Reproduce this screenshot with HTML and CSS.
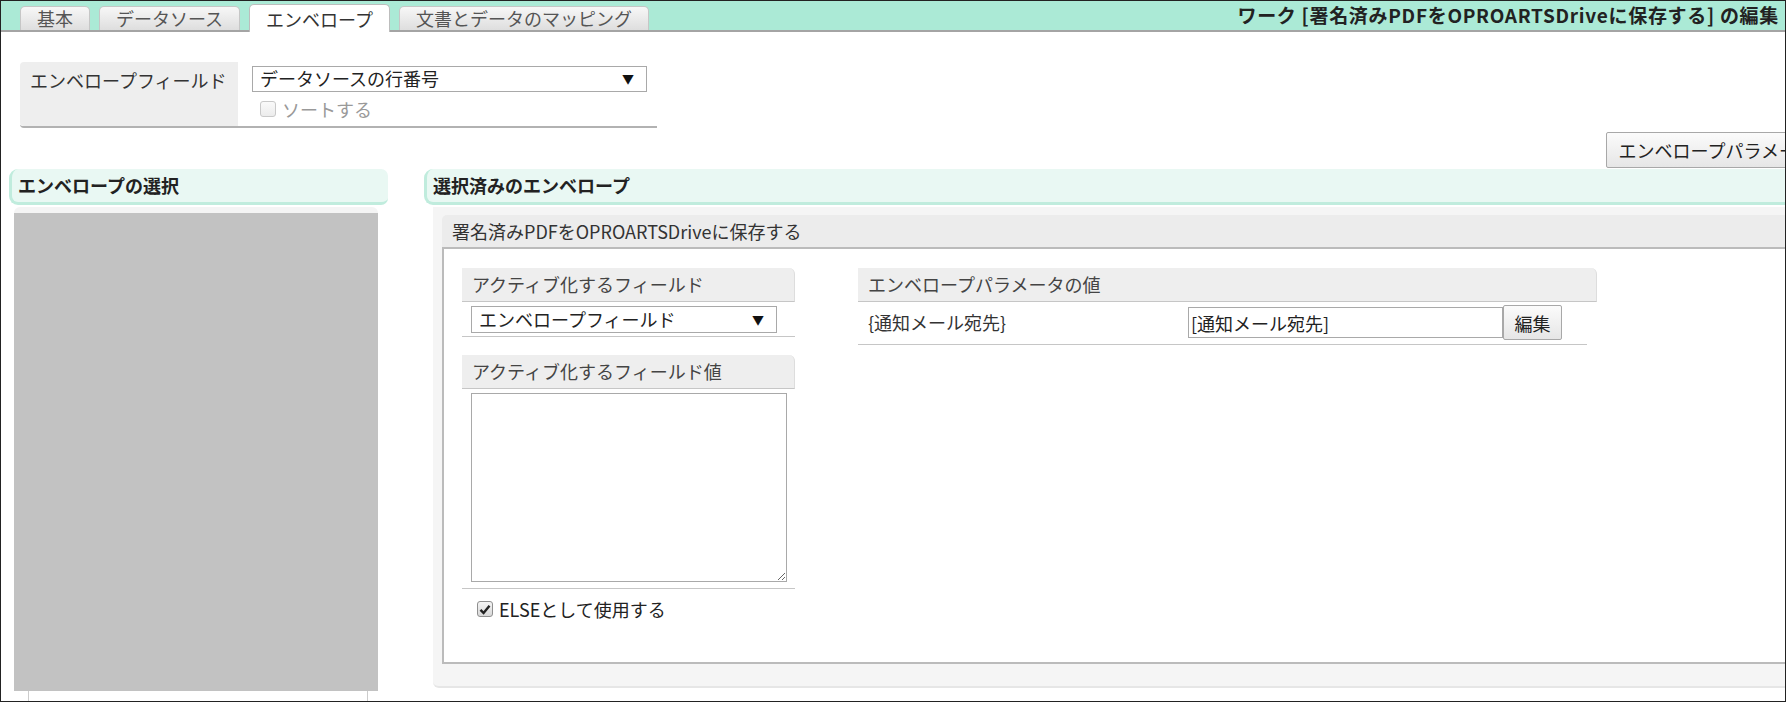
FILE: index.html
```html
<!DOCTYPE html>
<html lang="ja">
<head>
  <meta charset="UTF-8" />
  <title>ワークの編集</title>
  <link rel="stylesheet" href="styles.css">
</head>
<body>
<div class="frame">

  <!-- タブ -->
  <header class="tabbar">
    <ul class="tabs">
      <li class="tab">基本</li>
      <li class="tab">データソース</li>
      <li class="tab active">エンベロープ</li>
      <li class="tab">文書とデータのマッピング</li>
    </ul>
    <h1 class="work-title">ワーク [署名済みPDFをOPROARTSDriveに保存する] の編集</h1>
  </header>

  <div class="content">

    <!-- エンベロープフィールド -->
    <div class="field-box">
      <div class="field-label">エンベロープフィールド</div>
      <div class="field-value">
        <div class="select select-wide"><span>データソースの行番号</span><span class="arrow">▼</span></div>
        <label class="check-line disabled"><span class="chk"></span>ソートする</label>
      </div>
    </div>

    <div class="toolbar">
      <button class="btn param-btn">エンベロープパラメータ</button>
    </div>

    <div class="columns">
      <!-- 左 -->
      <section class="col-left">
        <h2 class="sec-head">エンベロープの選択</h2>
        <div class="left-panel">
          <div class="env-list"></div>
        </div>
        <div class="env-list-foot"></div>
      </section>

      <!-- 右 -->
      <section class="col-right">
        <h2 class="sec-head">選択済みのエンベロープ</h2>
        <div class="right-panel">
          <div class="env-card">
            <div class="env-title">署名済みPDFをOPROARTSDriveに保存する</div>
            <div class="env-body">

              <div class="activate">
                <div class="box-head">アクティブ化するフィールド</div>
                <div class="box-row">
                  <div class="select select-small"><span>エンベロープフィールド</span><span class="arrow">▼</span></div>
                </div>

                <div class="box-head second">アクティブ化するフィールド値</div>
                <div class="box-row">
                  <textarea class="value-area"></textarea>
                </div>
                <label class="check-line else-line">
                  <span class="chk checked">
                    <svg width="12" height="11" viewBox="0 0 12 11"><path d="M1.5 5.8 L4.6 9 L10.5 1.8" fill="none" stroke="#222" stroke-width="2.4"/></svg>
                  </span>ELSEとして使用する
                </label>
              </div>

              <div class="params">
                <div class="box-head">エンベロープパラメータの値</div>
                <div class="param-row">
                  <span class="param-name">{通知メール宛先}</span>
                  <input class="param-input" type="text" value="[通知メール宛先]">
                  <button class="btn edit-btn">編集</button>
                </div>
              </div>

            </div>
          </div>
        </div>
      </section>
    </div>

  </div>
</div>
</body>
</html>
```

FILE: styles.css
```css
* {
  box-sizing: border-box;
  margin: 0;
  padding: 0;
}

body {
  font-family: "Noto Sans CJK JP", "Noto Sans", sans-serif;
  font-size: 18px;
  line-height: 1.3;
  color: #333;
  background: #fff;
}

.frame {
  width: 1786px;
  height: 702px;
  border: 1px solid #222;
  overflow: hidden;
}

/********* TABS *********/
.tabbar {
  height: 31px;
  background: #abead6;
  border-bottom: 2px solid #a4a4a4;
  display: flex;
  justify-content: space-between;
  align-items: center;
  padding: 0 6px 0 19px;
}

.tabs {
  list-style: none;
  display: flex;
  align-items: flex-end;
  gap: 9px;
  align-self: flex-end;
  margin-bottom: -2px;
}

.tab {
  height: 24px;
  line-height: 23px;
  padding: 0 16px;
  margin-bottom: 2px;
  color: #555;
  background: linear-gradient(#f7f7f7, #dedede);
  border: 1px solid #c6c6c6;
  border-bottom: none;
  border-radius: 5px 5px 0 0;
}

.tab.active {
  height: 28px;
  line-height: 28px;
  margin-bottom: 0;
  color: #333;
  background: #fff;
  border-color: #bdbdbd;
}

.work-title {
  font-size: 19px;
  font-weight: bold;
  letter-spacing: 0.7px;
  color: #222;
  white-space: nowrap;
}

/********* CONTENT *********/
.content {
  width: 1827px;
}

.field-box {
  display: flex;
  width: 637px;
  margin: 30px 0 0 19px;
  border-bottom: 2px solid #b2b2b2;
  border-radius: 4px 0 0 4px;
}

.field-label {
  width: 219px;
  padding: 6px 10px;
  line-height: 24px;
  background: #eee;
  border-right: 1px solid #fff;
  border-radius: 4px 0 0 4px;
}

.field-value {
  flex: 1;
  padding: 4px 0 5px 13px;
}

.select {
  display: flex;
  justify-content: space-between;
  align-items: center;
  border: 1px solid #a9a9a9;
  background: #fff;
  padding: 0 12px 0 7px;
  color: #222;
}

.select .arrow {
  font-size: 12px;
  color: #111;
}

.select-wide {
  width: 395px;
  height: 26px;
}

.select-small {
  width: 306px;
  height: 27px;
}

.check-line {
  display: flex;
  align-items: center;
  gap: 6px;
  line-height: 24px;
}

.check-line.disabled {
  color: #999;
  margin: 5px 0 0 8px;
}

.chk {
  width: 16px;
  height: 16px;
  border: 1px solid #c9c9c9;
  border-radius: 3px;
  background: linear-gradient(#fafafa, #ececec);
  display: flex;
  align-items: center;
  justify-content: center;
}

.chk.checked {
  border-color: #8f8f8f;
  background: linear-gradient(#f4f4f4, #d8d8d8);
}

.btn {
  font-family: inherit;
  font-size: 18px;
  color: #222;
  background: linear-gradient(#fbfbfb, #e6e6e6);
  border: 1px solid #a8a8a8;
  border-radius: 2px;
  cursor: pointer;
}

.toolbar {
  display: flex;
  justify-content: flex-end;
  margin-top: 4px;
}

.param-btn {
  height: 36px;
  padding: 0 12px;
  white-space: nowrap;
}

/********* COLUMNS *********/
.columns {
  display: flex;
  gap: 36px;
  padding-left: 8px;
  margin-top: 1px;
}

.col-left {
  width: 379px;
}

.col-right {
  flex: 1;
}

.sec-head {
  height: 36px;
  line-height: 32px;
  font-size: 18px;
  font-weight: bold;
  color: #222;
  padding-left: 6px;
  background: #e9f8f3;
  border-left: 3px solid #c0ecdd;
  border-bottom: 3px solid #c0ecdd;
  border-radius: 9px 7px 7px 9px;
}

.left-panel {
  margin: 2px 10px 0 5px;
  padding-top: 6px;
  background: #f4f4f4;
  border-radius: 6px 6px 0 0;
}

.env-list {
  height: 478px;
  background: #c2c2c2;
}

.env-list-foot {
  height: 20px;
  margin: 0 20px 0 19px;
  border-left: 1px solid #ccc;
  border-right: 1px solid #ccc;
}

.right-panel {
  margin: 2px 0 0 9px;
  padding: 8px 0 22px 9px;
  background: #f5f5f5;
  border-bottom: 2px solid #e6e6e6;
  border-radius: 0 0 0 6px;
}

.env-title {
  height: 32px;
  line-height: 32px;
  padding-left: 10px;
  background: #ececec;
  border-radius: 5px 0 0 0;
}

.env-body {
  height: 417px;
  display: flex;
  gap: 63px;
  padding: 19px 0 0 18px;
  background: #fff;
  border-top: 2px solid #bbb;
  border-left: 2px solid #bbb;
  border-bottom: 2px solid #bbb;
}

.activate {
  width: 333px;
}

.box-head {
  height: 34px;
  line-height: 33px;
  padding-left: 10px;
  color: #444;
  background: #eee;
  border-right: 1px solid #ddd;
  border-bottom: 1px solid #c6c6c6;
  border-radius: 0 6px 0 0;
}

.box-head.second {
  margin-top: 18px;
}

.box-row {
  padding: 4px 0 3px 9px;
  border-bottom: 1px solid #c6c6c6;
}

.value-area {
  display: block;
  width: 316px;
  height: 189px;
  border: 1px solid #a9a9a9;
  resize: both;
  font-family: inherit;
  font-size: 18px;
  margin-bottom: 3px;
}

.else-line {
  margin: 8px 0 0 15px;
  color: #222;
}

.params {
  width: 739px;
}

.param-row {
  width: 729px;
  display: flex;
  align-items: center;
  padding: 3px 0 4px 10px;
  border-bottom: 1px solid #c6c6c6;
}

.param-name {
  width: 320px;
  color: #333;
}

.param-input {
  width: 315px;
  height: 31px;
  border: 1px solid #a9a9a9;
  padding: 0 2px;
  font-family: inherit;
  font-size: 18px;
  color: #222;
}

.edit-btn {
  width: 59px;
  height: 35px;
}
```
